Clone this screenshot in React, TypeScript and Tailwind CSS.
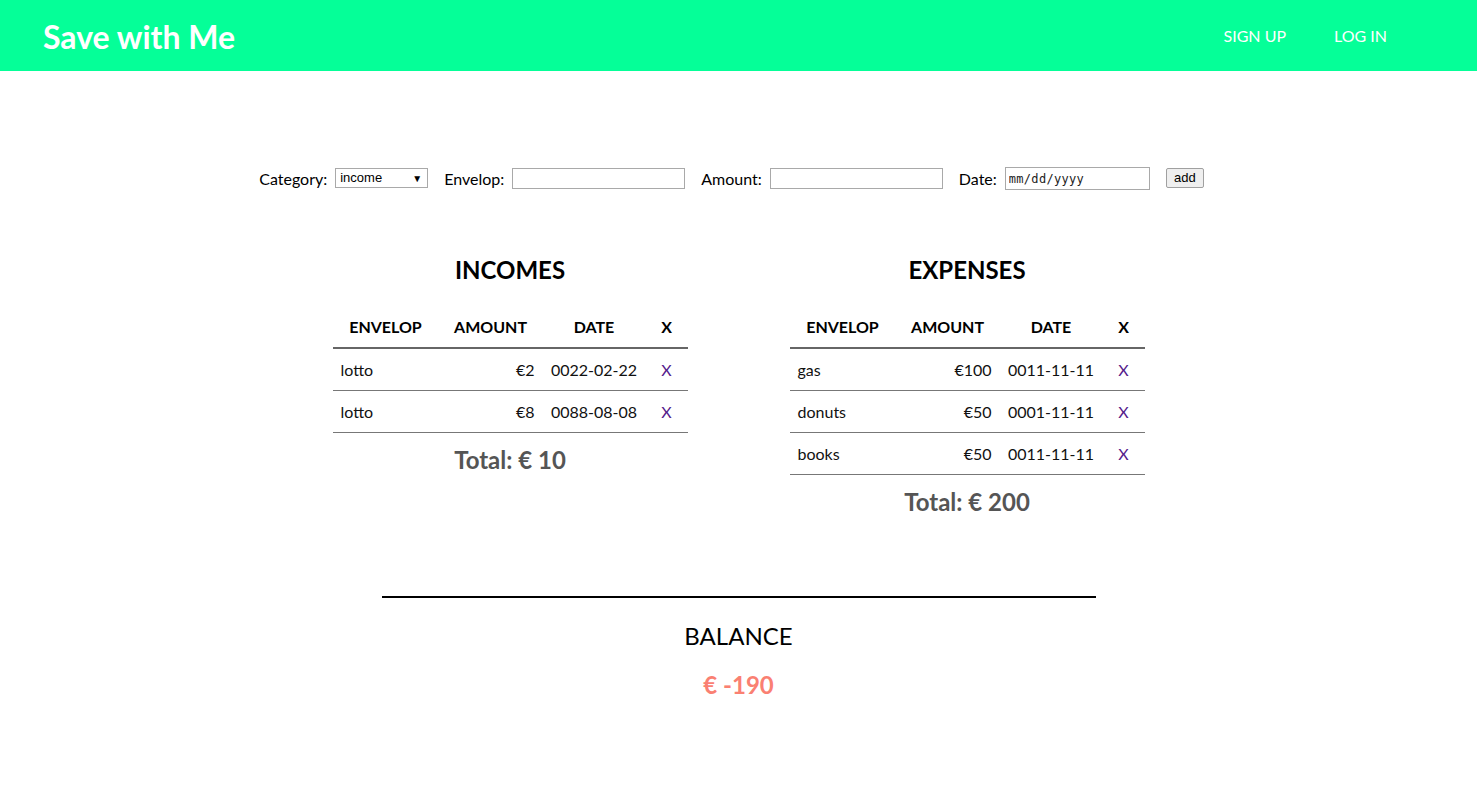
import React from "react";

type Entry = { id: number; envelop: string; amount: number; date: string };

const incomes: Entry[] = [
  { id: 1, envelop: "lotto", amount: 2, date: "0022-02-22" },
  { id: 2, envelop: "lotto", amount: 8, date: "0088-08-08" },
];

const expenses: Entry[] = [
  { id: 3, envelop: "gas", amount: 100, date: "0011-11-11" },
  { id: 4, envelop: "donuts", amount: 50, date: "0001-11-11" },
  { id: 5, envelop: "books", amount: 50, date: "0011-11-11" },
];

const lato = "font-['Lato','Open_Sans',sans-serif]";

// one table with its heading and total
const EntryTable = ({ title, items }: { title: string; items: Entry[] }) => {
  const total = items.reduce((sum, i) => sum + i.amount, 0);
  return (
    <div className="w-[355px] flex flex-col items-center">
      <h2 className="text-[24px] leading-[29px] font-bold text-black">{title}</h2>
      <table className="mt-[22px] w-full table-fixed border-separate border-spacing-0 text-[16px] leading-[19px]">
        <thead>
          <tr>
            <th className="w-[106px] py-[11px] font-bold border-b-2 border-[#666]">ENVELOP</th>
            <th className="w-[104px] py-[11px] font-bold border-b-2 border-[#666]">AMOUNT</th>
            <th className="w-[103px] py-[11px] font-bold border-b-2 border-[#666]">DATE</th>
            <th className="w-[42px] py-[11px] font-bold border-b-2 border-[#666]">X</th>
          </tr>
        </thead>
        <tbody>
          {items.map((item) => (
            <tr key={item.id} className="text-[#111]">
              <td className="py-[11px] pl-2 text-left border-b border-[#777]">{item.envelop}</td>
              <td className="py-[11px] pr-2 text-right border-b border-[#777]">€{item.amount}</td>
              <td className="py-[11px] text-center border-b border-[#777]">{item.date}</td>
              <td className="py-[11px] text-center border-b border-[#777]">
                <a href="#" className="text-[#551a8b]">X</a>
              </td>
            </tr>
          ))}
        </tbody>
      </table>
      <p className="mt-[12px] text-[24px] leading-[29px] font-bold text-[#555]">Total: € {total}</p>
    </div>
  );
};

export default function App() {
  const balance =
    incomes.reduce((s, i) => s + i.amount, 0) - expenses.reduce((s, i) => s + i.amount, 0);

  return (
    <div className={`min-h-[802px] bg-white text-black ${lato}`}>
      {/* Header */}
      <header className="h-[71px] bg-[#05ff98] flex items-center justify-between pl-[43px] pr-[90px]">
        <h1 className="text-[32px] leading-[38px] font-bold text-white pt-[2px]">Save with Me</h1>
        <nav className="flex gap-[48px] text-[16px] leading-[19px] text-white">
          <a href="#">SIGN UP</a>
          <a href="#">LOG IN</a>
        </nav>
      </header>

      {/* Add form */}
      <form className="mt-[95px] h-[24px] flex items-center justify-center gap-4 pr-[14px] text-[16px] leading-[19px]">
        <label className="flex items-center gap-2">
          Category:
          <span className="relative">
            <select className="block appearance-none w-[93px] h-[20px] py-0 border border-[#a9a9a9] bg-white text-[13px] leading-[18px] font-['Liberation_Sans',sans-serif] pl-[4px]">
              <option>income</option>
              <option>expense</option>
            </select>
            <span className="absolute right-[6px] top-[4px] text-[10px] leading-[12px] pointer-events-none">▼</span>
          </span>
        </label>
        <label className="flex items-center gap-2">
          Envelop:
          <input type="text" className="w-[173px] h-[21px] border border-[#a9a9a9] bg-white" />
        </label>
        <label className="flex items-center gap-2">
          Amount:
          <input type="text" className="w-[173px] h-[21px] border border-[#a9a9a9] bg-white" />
        </label>
        <label className="flex items-center gap-2">
          Date:
          <input
            type="text"
            placeholder="mm/dd/yyyy"
            className="w-[145px] h-[23px] border border-[#a9a9a9] bg-white px-[3px] pt-[2px] text-[12px] tracking-[0.3px] font-['DejaVu_Sans_Mono',monospace] placeholder:text-[#222]"
          />
        </label>
        <button
          type="button"
          className="w-[38px] h-[20px] border border-[#a0a0a0] bg-[#efefef] rounded-[2px] text-[13px] leading-[16px] font-['Liberation_Sans',sans-serif]"
        >
          add
        </button>
      </form>

      {/* Tables */}
      <div className="mt-[65px] flex justify-center items-start gap-[102px]">
        <EntryTable title="INCOMES" items={incomes} />
        <EntryTable title="EXPENSES" items={expenses} />
      </div>

      {/* Balance */}
      <div className="mt-[80px] flex flex-col items-center">
        <hr className="w-[714px] border-0 border-t-2 border-black" />
        <h2 className="mt-[23px] text-[24px] leading-[29px] font-normal">BALANCE</h2>
        <p className="mt-[20px] text-[24px] leading-[29px] font-bold text-[#fa8072]">€ {balance}</p>
      </div>
    </div>
  );
}
